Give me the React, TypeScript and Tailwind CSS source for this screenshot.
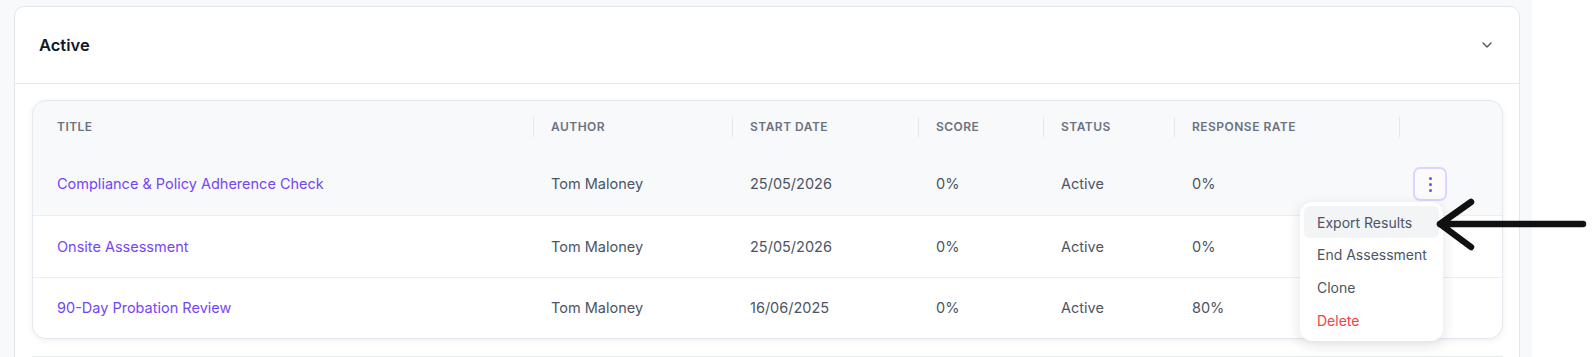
import React from "react";
import { ChevronDown } from "lucide-react";

const rows = [
  { title: "Compliance & Policy Adherence Check", author: "Tom Maloney", date: "25/05/2026", score: "0%", status: "Active", rate: "0%", active: true },
  { title: "Onsite Assessment", author: "Tom Maloney", date: "25/05/2026", score: "0%", status: "Active", rate: "0%", active: false },
  { title: "90-Day Probation Review", author: "Tom Maloney", date: "16/06/2025", score: "0%", status: "Active", rate: "80%", active: false },
];

const headers = ["TITLE", "AUTHOR", "START DATE", "SCORE", "STATUS", "RESPONSE RATE", ""];

const grid = "grid grid-cols-[500px_199px_186px_125px_131px_225px_1fr]";

export default function App() {
  return (
    <div className="w-[1595px] h-[357px] overflow-hidden bg-white flex font-['Inter',sans-serif]">
      <div className="w-[1532px] h-full bg-[#f8f9fb] pl-[14px] pr-[12px] pt-[6px]">
        <div className="bg-white border border-[#e3e6eb] rounded-t-[10px] h-[400px]">
          <div className="h-[77px] flex items-center justify-between pl-[24px] pr-[24px] border-b border-[#e6e8ec]">
            <span className="text-[16.5px] font-semibold text-[#111827]">Active</span>
            <ChevronDown className="w-[16px] h-[16px] text-[#4b5563]" strokeWidth={2} />
          </div>
          <div className="pt-[16px] pl-[17px] pr-[16px]">
            <div className="relative bg-[#f8f9fb] border border-[#e5e8ee] rounded-[14px] shadow-[0_2px_6px_rgba(16,24,40,0.06)]">
              <div className={`${grid} h-[52px] items-center`}>
                {headers.map((h, i) => (
                  <div
                    key={i}
                    className={
                      i === 0
                        ? "pl-[24px] text-[12px] font-semibold tracking-[0.04em] text-[#6b7280]"
                        : "h-[20px] flex items-center border-l border-[#e5e7eb] pl-[17px] text-[12px] font-semibold tracking-[0.04em] text-[#6b7280]"
                    }
                  >
                    {h}
                  </div>
                ))}
              </div>
              {rows.map((r, idx) => (
                <div
                  key={idx}
                  className={`${grid} items-center text-[14.5px] text-[#4b5563] ${idx > 0 ? "border-t border-[#eceef2]" : ""} ${r.active ? "bg-[#f8f9fb]" : "bg-white"} ${idx === rows.length - 1 ? "rounded-b-[14px] h-[61px]" : "h-[62px]"}`}
                >
                  <div className="pl-[24px] text-[#7446f5]">{r.title}</div>
                  <div className="pl-[18px]">{r.author}</div>
                  <div className="pl-[18px]">{r.date}</div>
                  <div className="pl-[18px]">{r.score}</div>
                  <div className="pl-[18px]">{r.status}</div>
                  <div className="pl-[18px]">{r.rate}</div>
                  <div className="pl-[14px] relative">
                    {r.active && (
                      <>
                        <div className="w-[34px] h-[34px] border-2 border-[#e0d2ff] rounded-[7px] flex flex-col items-center justify-center gap-[3px] bg-white/40">
                          <span className="w-[3px] h-[3px] rounded-full bg-[#7446f5]" />
                          <span className="w-[3px] h-[3px] rounded-full bg-[#7446f5]" />
                          <span className="w-[3px] h-[3px] rounded-full bg-[#7446f5]" />
                        </div>
                        <div className="absolute left-[-99px] top-[35px] z-10 w-[143px] bg-white rounded-[12px] shadow-[0_4px_14px_rgba(16,24,40,0.12)] p-[4px] text-[14px]">
                          <div className="h-[32px] flex items-center pl-[13px] rounded-[6px] bg-[#f3f4f6] text-[#4b5563]">Export Results</div>
                          <div className="h-[33px] flex items-center pl-[13px] text-[#4b5563]">End Assessment</div>
                          <div className="h-[33px] flex items-center pl-[13px] text-[#4b5563]">Clone</div>
                          <div className="h-[33px] flex items-center pl-[13px] text-[#ef4444]">Delete</div>
                        </div>
                      </>
                    )}
                  </div>
                </div>
              ))}
            </div>
            <div className="mt-[17px] border-t border-[#e6e8ec]" />
          </div>
        </div>
      </div>
      <div className="flex-1" />
      <svg className="absolute left-[1434px] top-[196px] z-20" width="156" height="56" viewBox="0 0 156 56">
        <path d="M6 28 H149 M6 28 L37 6 M6 28 L37 51" stroke="#111111" strokeWidth="6.5" strokeLinecap="round" strokeLinejoin="round" fill="none" />
      </svg>
    </div>
  );
}
